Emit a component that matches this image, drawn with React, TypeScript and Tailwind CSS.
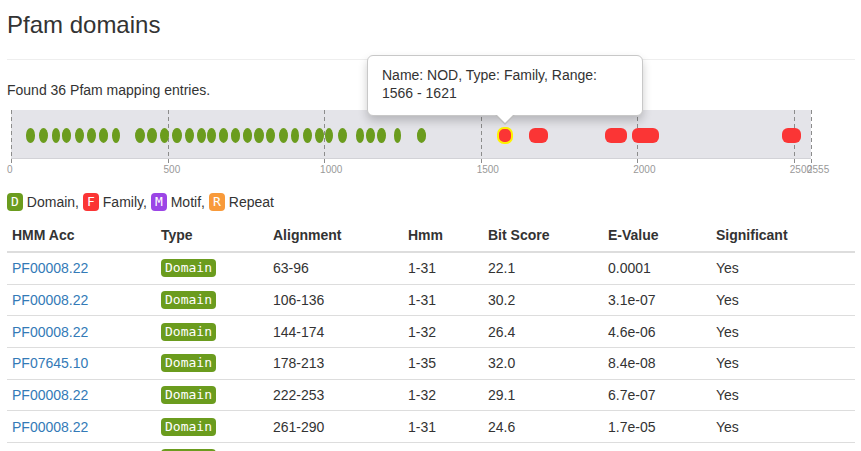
const GREEN: [number, number][] = [
  [14.4, 9.6], [28, 9], [40.4, 8.6], [50.7, 9.3], [64, 9], [76, 9], [87.4, 9.3], [101, 7.7],
  [124, 10], [136, 9.4], [149, 9], [161, 9.4], [173.4, 9], [185.4, 9], [196, 8.7], [207.7, 9.3],
  [219.4, 9.3], [231.7, 9.3], [243, 9.4], [255, 9], [267.4, 9], [279.7, 8.3], [292, 8.7], [304, 9],
  [314, 8], [327, 9], [344.4, 8.3], [355, 8.4], [366, 8.4], [382.4, 7.6], [405.4, 9.3],
]

const RED: [number, number][] = [
  [518, 18.4], [594, 22], [620.4, 27.6], [771, 19],
]

const TICKS = [0, 500, 1000, 1500, 2000, 2500, 2555]
const SCALE = 800 / 2555

const ROWS = [
  ["PF00008.22", "63-96", "1-31", "22.1", "0.0001", "Yes"],
  ["PF00008.22", "106-136", "1-31", "30.2", "3.1e-07", "Yes"],
  ["PF00008.22", "144-174", "1-32", "26.4", "4.6e-06", "Yes"],
  ["PF07645.10", "178-213", "1-35", "32.0", "8.4e-08", "Yes"],
  ["PF00008.22", "222-253", "1-32", "29.1", "6.7e-07", "Yes"],
  ["PF00008.22", "261-290", "1-31", "24.6", "1.7e-05", "Yes"],
  ["PF00008.22", "299-331", "1-31", "27.3", "1.1e-06", "Yes"],
]

const cols = "grid grid-cols-[149px_112px_135px_80px_120px_108px_143px] items-center"

function Badge({ color, children }: { color: string; children: React.ReactNode }) {
  return (
    <span
      className={`inline-flex h-[18px] items-center rounded-[4px] px-[4px] font-['DejaVu_Sans_Mono',monospace] text-[13px] leading-[18px] text-white ${color}`}
    >
      {children}
    </span>
  )
}

export default function App() {
  return (
    <div className="relative h-[451px] w-[861px] overflow-hidden bg-white font-['Liberation_Sans',Arial,sans-serif] text-[14px] text-[#333]">
      <div className="ml-[7px] w-[848px]">
        <h3 className="pt-[12px] text-[24px] leading-[26px]">Pfam domains</h3>
        <div className="mt-[21px] border-t border-[#eee]" />
        <p className="mt-[20px] leading-[20px]">Found 36 Pfam mapping entries.</p>

        {/* domain track */}
        <div className="relative ml-[4.3px] mt-[10px] h-[82px] w-[800px]">
          <div className="absolute inset-x-0 top-0 h-[49px] border-b border-[#d2d2d7] bg-[#e4e4e9]" />
          <svg className="absolute left-0 top-0" width="802" height="56">
            {TICKS.map((t) => {
              const x = Math.round(t * SCALE) + 0.5
              return <line key={t} x1={x} x2={x} y1={0} y2={55} stroke="#8c8c8c" strokeWidth={1} strokeDasharray="4 3" />
            })}
          </svg>
          {GREEN.map(([x, w], i) => (
            <div
              key={i}
              className="absolute top-[18px] h-[15px] rounded-[50%] bg-[#6b9c1e]"
              style={{ left: x, width: w }}
            />
          ))}
          <div className="absolute left-[485.4px] top-[17px] h-[17px] w-[16.6px] rounded-[7px] border-2 border-[#fff200] bg-[#fb3535]" />
          {RED.map(([x, w], i) => (
            <div
              key={i}
              className="absolute top-[18px] h-[15px] rounded-[6px] bg-[#fb3535]"
              style={{ left: x, width: w }}
            />
          ))}
          {TICKS.map((t) => (
            <span
              key={t}
              className="absolute top-[54.4px] text-[10px] leading-[12px] text-[#999]"
              style={{ left: t * SCALE - 4.3 }}
            >
              {t}
            </span>
          ))}
        </div>

        {/* legend */}
        <div className="flex h-[20px] items-center gap-[4px]">
          <Badge color="bg-[#6b9c1e]">D</Badge>
          <span>Domain,</span>
          <Badge color="bg-[#fb3535]">F</Badge>
          <span>Family,</span>
          <Badge color="bg-[#9b45e6]">M</Badge>
          <span>Motif,</span>
          <Badge color="bg-[#f89a3a]">R</Badge>
          <span>Repeat</span>
        </div>

        {/* table */}
        <div className={`${cols} mt-[6px] h-[35px] border-b-2 border-[#ddd] font-bold`}>
          {["HMM Acc", "Type", "Alignment", "Hmm", "Bit Score", "E-Value", "Significant"].map((h) => (
            <div key={h} className="px-[5px] leading-[20px]">{h}</div>
          ))}
        </div>
        {ROWS.map((r, i) => (
          <div key={i} className={`${cols} h-[31.67px] border-b border-[#ddd]`}>
            <div className="px-[5px] leading-[20px] text-[#337ab7]">{r[0]}</div>
            <div className="flex px-[5px]">
              <Badge color="bg-[#6b9c1e]">Domain</Badge>
            </div>
            <div className="px-[5px] leading-[20px]">{r[1]}</div>
            <div className="px-[5px] leading-[20px]">{r[2]}</div>
            <div className="px-[5px] leading-[20px]">{r[3]}</div>
            <div className="px-[5px] leading-[20px]">{r[4]}</div>
            <div className="px-[5px] leading-[20px]">{r[5]}</div>
          </div>
        ))}
      </div>

      {/* tooltip */}
      <div className="absolute left-[367px] top-[55px] h-[61px] w-[276px] rounded-[6px] border border-[#c8c8c8] bg-white px-[14px] pt-[10px] leading-[18px] shadow-[0_5px_10px_rgba(0,0,0,0.2)]">
        Name: NOD, Type: Family, Range: 1566 - 1621
        <div className="absolute left-[127px] top-[59px] h-0 w-0 border-x-[10px] border-t-[10px] border-x-transparent border-t-[#bdbdbd]" />
        <div className="absolute left-[128px] top-[58px] h-0 w-0 border-x-[9px] border-t-[9px] border-x-transparent border-t-white" />
      </div>
    </div>
  )
}
